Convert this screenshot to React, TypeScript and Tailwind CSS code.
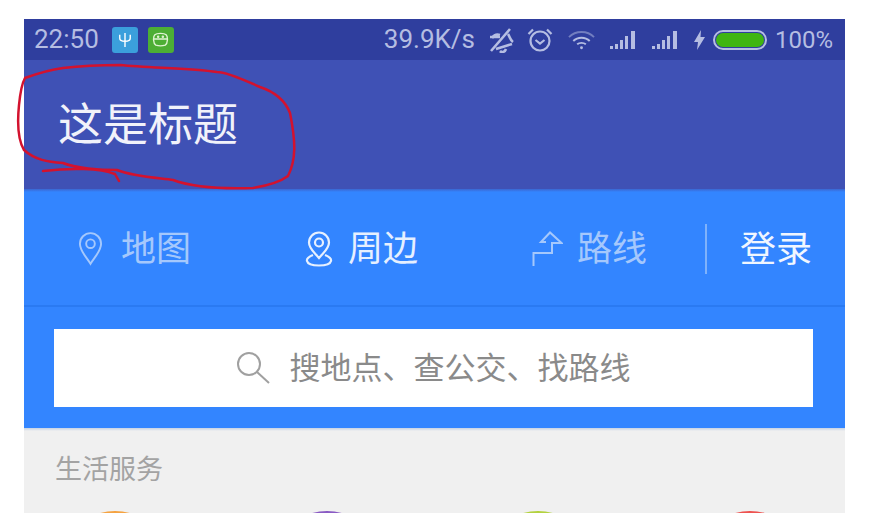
import React from "react";

const cjk = "font-['Roboto','Noto_Sans_CJK_SC',sans-serif]";

const PinIcon = ({ className }: { className?: string }) => (
	<svg viewBox="0 0 26 36" className={className} fill="none" stroke="currentColor" strokeWidth="2">
		<path d="M13 34 C9 27 2 21 2 13 A11 11 0 0 1 24 13 C24 21 17 27 13 34 Z" />
		<circle cx="13" cy="13" r="4.5" />
	</svg>
);

const NearbyIcon = ({ className }: { className?: string }) => (
	<svg viewBox="0 0 28 36" className={className} fill="none" stroke="currentColor" strokeWidth="2.2">
		<path d="M14 27 C10 22 4 18 4 11.500 A10 10 0 0 1 24 11.500 C24 18 18 22 14 27 Z" />
		<circle cx="14" cy="11.500" r="4" />
		<path d="M8 24 C3 26 1.500 28 2 30 C3 34 8 34.500 14 34.500 C20 34.500 25 34 26 30 C26.500 28 25 26 20 24" />
	</svg>
);

const RouteIcon = ({ className }: { className?: string }) => (
	<svg viewBox="0 0 31 36" className={className} fill="none" stroke="currentColor" strokeWidth="2">
		<path d="M1.500 35 V22 H20 V12 H29.500 L18 1.500 L9 11 H14" />
	</svg>
);

const SearchIcon = ({ className }: { className?: string }) => (
	<svg viewBox="0 0 34 34" className={className} fill="none" stroke="currentColor" strokeWidth="2">
		<circle cx="12" cy="13" r="11" />
		<path d="M20 21 L32 32" />
	</svg>
);

const Signal = () => (
	<svg viewBox="0 0 28 20" className="w-[28px] h-[20px]" fill="currentColor">
		<rect x="0" y="16" width="3" height="3" />
		<rect x="5" y="14" width="3" height="5" />
		<rect x="10" y="10" width="3" height="9" />
		<rect x="15" y="6" width="3" height="13" />
		<rect x="21" y="1" width="4" height="18" />
	</svg>
);

const StatusBar = () => (
	<div className="h-[41px] bg-[#2f3e9e] flex items-center justify-between pl-[10px] pr-[12px] text-[#b5bde2] font-['Roboto',sans-serif]">
		<div className="flex items-center">
			<span className="text-[26px]">22:50</span>
			<div className="ml-[13px] w-[26px] h-[26px] rounded-[3px] bg-[#3b9fdc] flex items-center justify-center">
				<svg viewBox="0 0 16 18" className="w-[14px] h-[16px] text-white" fill="none" stroke="currentColor" strokeWidth="1.600">
					<path d="M2 3 V7 C2 10 5 10.500 8 10.500 C11 10.500 14 10 14 7 V3 M8 1 V17" />
				</svg>
			</div>
			<div className="ml-[10px] w-[26px] h-[26px] rounded-[3px] bg-[#4cae34] flex items-center justify-center">
				<svg viewBox="0 0 18 16" className="w-[17px] h-[15px] text-[#dff3d2]" fill="none" stroke="currentColor" strokeWidth="1.500">
					<path d="M3 3 C5 1 13 1 15 3 C17 5 17 12 14 14 C11 15 7 15 4 14 C1 12 1 5 3 3 Z M2 7.500 H16" />
					<circle cx="6.500" cy="5" r="0.600" />
					<circle cx="11.500" cy="5" r="0.600" />
				</svg>
			</div>
		</div>
		<div className="flex items-center text-[24px]">
			<span className="text-[26px]">39.9K/s</span>
			<svg viewBox="0 0 26 26" className="ml-[13px] w-[26px] h-[26px]" fill="none" stroke="currentColor" strokeWidth="2.600">
				<path d="M4 11 C6 8 9 7 12 8 M20 7 C22 10 22 13 25 15 M8 22 L24 17 M12 24 C14 26 17 25 18 22" />
				<path d="M2 10 H12 M3 24 L22 2" />
			</svg>
			<svg viewBox="0 0 26 26" className="ml-[13px] w-[26px] h-[26px]" fill="none" stroke="currentColor" strokeWidth="2.200">
				<circle cx="13" cy="14" r="9.500" />
				<path d="M8.500 13 L13 16.500 L17.500 13 M1.500 7 L6 2.500 M24.500 7 L20 2.500" />
			</svg>
			<svg viewBox="0 0 28 20" className="ml-[15px] w-[27px] h-[20px]" fill="none" stroke="currentColor" strokeWidth="2">
				<path d="M1 7 C8 0 20 0 27 7" strokeOpacity="0.500" />
				<path d="M5.500 11 C10 6.500 18 6.500 22.500 11" />
				<path d="M9.500 14.500 C12 12.500 16 12.500 18.500 14.500" />
				<circle cx="14" cy="18" r="1.500" fill="currentColor" stroke="none" />
			</svg>
			<div className="ml-[15px]"><Signal /></div>
			<div className="ml-[14px]"><Signal /></div>
			<svg viewBox="0 0 11 20" className="ml-[14px] w-[11px] h-[20px]" fill="currentColor">
				<path d="M7 0 L0 12 H4 L3 20 L11 7 H6.500 Z" />
			</svg>
			<div className="ml-[8px] w-[54px] h-[20px] rounded-full border-2 border-[#b5bde2] p-[1px]">
				<div className="h-full rounded-full bg-[#3fb511]" />
			</div>
			<span className="ml-[8px]">100%</span>
		</div>
	</div>
);

const NavItem = ({ label, active, icon, className }: { label: string; active?: boolean; icon: React.ReactNode; className?: string }) => (
	<div className={`flex items-center ${active ? "text-[#e6f0ff]" : "text-[#a5c8fc]"} ${className}`}>
		{icon}
		<span className="text-[35px] leading-none pt-[2px]">{label}</span>
	</div>
);

export default function App() {
	return (
		<div className={`relative w-[881px] h-[513px] overflow-hidden bg-white pt-[19px] pl-[24px] ${cjk}`}>
			<div className="w-[821px]">
				<StatusBar />
				<div className="h-[129px] pt-[2px] bg-[#3f51b5] flex items-center pl-[34px] text-[45px] text-[#f1f2fa]">
					这是标题
				</div>
				<div className="bg-[#3385ff]">
					<div className="h-[3px] bg-gradient-to-b from-[#3a66d0] to-[#3385ff]" />
					<div className="h-[115px] border-b-2 border-[#2a7af2] flex items-center">
						<NavItem label="地图" className="ml-[54px]" icon={<PinIcon className="w-[25px] h-[35px] mr-[18px]" />} />
						<NavItem label="周边" active className="ml-[114px]" icon={<NearbyIcon className="w-[28px] h-[36px] mr-[15px]" />} />
						<NavItem label="路线" className="ml-[114px]" icon={<RouteIcon className="w-[31px] h-[36px] mr-[14px]" />} />
						<div className="ml-[58px] w-[2px] h-[50px] bg-[#7fb2fb]" />
						<span className="ml-[33px] pt-[2px] text-[36px] leading-none text-[#f0f6ff]">登录</span>
					</div>
					<div className="pt-[22px] pb-[21px] pl-[30px] pr-[32px]">
						<div className="h-[78px] bg-white flex items-center justify-center text-[31px] text-[#8a8a8a]">
							<SearchIcon className="w-[34px] h-[34px] mr-[19px] text-[#a0a0a0]" />
							<span className="pt-[3px]">搜地点、查公交、找路线</span>
						</div>
					</div>
				</div>
				<div className="bg-[#f0f0f0] h-[200px]">
					<div className="h-[3px] bg-gradient-to-b from-[#c6d2e4] to-[#f0f0f0]" />
					<div className="pl-[31px] pt-[21px] text-[27px] leading-[36px] text-[#a3a3a3]">生活服务</div>
					<div className="mt-[23px] ml-[36px] mr-[40px] flex justify-between">
						<div className="w-[110px] h-[110px] rounded-full bg-[#f5a341]" />
						<div className="w-[110px] h-[110px] rounded-full bg-[#8a5bc4]" />
						<div className="w-[110px] h-[110px] rounded-full bg-[#b3d23f]" />
						<div className="w-[110px] h-[110px] rounded-full bg-[#ee5350]" />
					</div>
				</div>
			</div>
			{/* hand-drawn annotation around the title */}
			<svg viewBox="0 0 881 513" className="absolute inset-0 w-[881px] h-[513px] pointer-events-none" fill="none" stroke="#d3122e" strokeWidth="2.500" strokeLinecap="round" strokeLinejoin="round">
				<path d="M63 68 C48 70 36 74 25 78 C21 85 20 95 19 105 C17 125 18 140 24 150 C35 160 48 162 63 163 C75 168 100 170 117 170 C135 177 160 178 173 180 C195 188 225 189 253 188 C265 186 280 182 288 176 C296 160 296 143 290 113 C285 100 275 92 260 87 C240 78 225 72 217 72 C190 68 150 68 120 65 C100 65 80 66 63 68 Z" />
				<path d="M43 171 C70 168 100 168 115 174 L119 181" />
			</svg>
		</div>
	);
}
